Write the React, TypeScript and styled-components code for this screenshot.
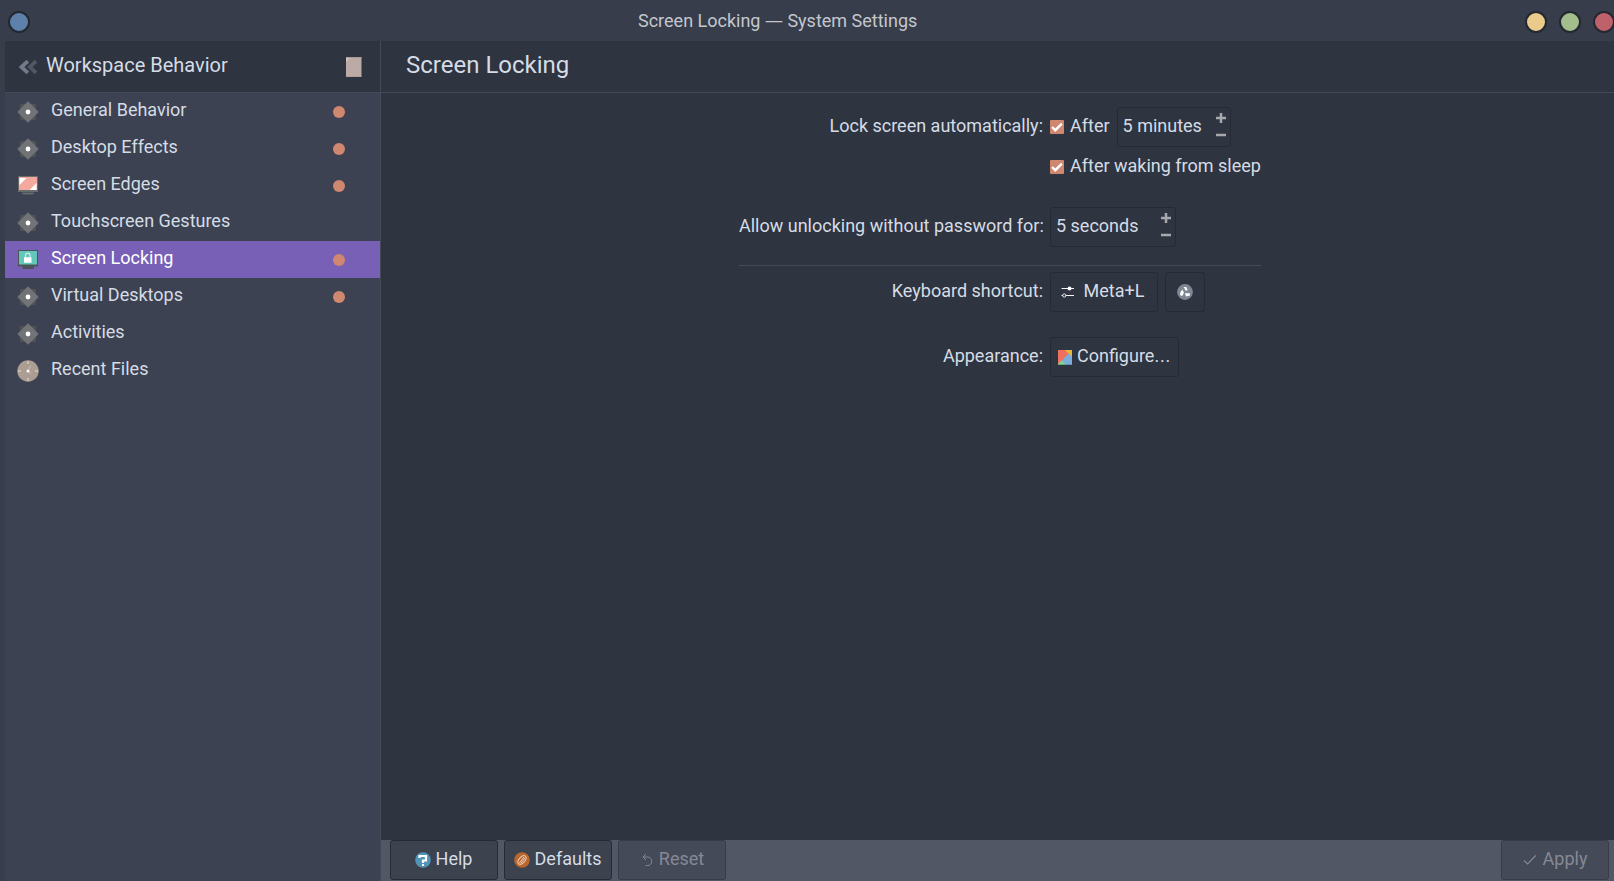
import React from "react";
import styled, { createGlobalStyle } from "styled-components";

const Global = createGlobalStyle`
  * { box-sizing: border-box; }
  html, body { margin: 0; padding: 0; background: #2e3440; overflow: hidden; }
  body { font-family: Roboto, "Noto Sans", sans-serif; font-size: 18px; color: #d5dce6; }
  svg { flex: none; }
`;

const Window = styled.div`
  width: 1614px;
  height: 881px;
  display: flex;
  flex-direction: column;
  overflow: hidden;
  background: #373e4b;
`;

const TitleBar = styled.header`
  height: 41px;
  flex: none;
  display: grid;
  grid-template-columns: 638px 1fr auto;
  align-items: center;
  padding: 3px 0 0 8px;
  margin-right: -1px;
  background: #373d4b;
`;

const WindowTitle = styled.span`
  color: #c3c7cd;
  margin-left: -8px;
  line-height: 34px;
  padding-bottom: 2px;
  white-space: nowrap;
`;

const Dash = styled.span`
  font-family: "Noto Sans", sans-serif;
  line-height: 1;
`;

const WindowButtons = styled.div`
  display: flex;
  gap: 12px;
`;

const RoundButton = styled.span<{ $color: string }>`
  width: 22px;
  height: 22px;
  border-radius: 50%;
  border: 2px solid #232831;
  background: ${(p) => p.$color};
`;

const Body = styled.div`
  flex: 1;
  min-height: 0;
  display: flex;
  padding-left: 5px;
`;

const Sidebar = styled.nav`
  width: 376px;
  flex: none;
  background: #3c4251;
  border-right: 1px solid #444956;
`;

const SideHeader = styled.div`
  height: 52px;
  display: flex;
  align-items: center;
  padding: 0 18px 0 13px;
  background: #2e3440;
  border-bottom: 1px solid #444956;
`;

const SideTitle = styled.span`
  flex: 1;
  margin-left: 8px;
  font-size: 20px;
  line-height: 44px;
  padding-bottom: 3px;
`;

const NavRow = styled.div<{ $active?: boolean }>`
  height: 37px;
  display: flex;
  align-items: center;
  padding: 0 35px 0 12px;
  background: ${(p) => (p.$active ? "#7860b7" : "transparent")};
  color: ${(p) => (p.$active ? "#ffffff" : "#d5dce6")};
`;

const NavLabel = styled.span`
  flex: 1;
  margin-left: 12px;
  line-height: 34px;
  padding-bottom: 3px;
`;

const Dot = styled.span`
  width: 12px;
  height: 12px;
  border-radius: 50%;
  background: #d08770;
  margin-top: 1px;
`;

const Main = styled.main`
  flex: 1;
  min-width: 0;
  display: flex;
  flex-direction: column;
  background: #2e3440;
`;

const MainHeader = styled.h1`
  margin: 0;
  height: 52px;
  flex: none;
  padding-left: 25px;
  font-size: 24px;
  font-weight: 400;
  line-height: 48px;
  border-bottom: 1px solid #444956;
`;

const Form = styled.div`
  flex: 1;
  padding: 14px 0 0 358px;
`;

const FormRow = styled.div<{ $gap?: number }>`
  height: 40px;
  margin-top: ${(p) => p.$gap ?? 0}px;
  display: grid;
  grid-template-columns: 304px auto;
  column-gap: 7px;
  align-items: center;
  justify-content: start;
`;

const Text = styled.span`
  line-height: 34px;
  padding-bottom: 3px;
  white-space: nowrap;
`;

const Dots = styled.span`
  letter-spacing: 0.8px;
`;

const Label = styled(Text)`
  text-align: right;
`;

const Controls = styled.div`
  display: flex;
  align-items: center;
`;

const CheckBox = styled.span`
  width: 14px;
  height: 14px;
  border-radius: 1px;
  background: #d08770;
  margin-right: 6px;
  display: flex;
`;

const Spin = styled.div<{ $width: number }>`
  width: ${(p) => p.$width}px;
  height: 40px;
  display: flex;
  align-items: center;
  justify-content: space-between;
  padding: 0 3px 0 5px;
  border: 1px solid #262a34;
  border-radius: 3px;
`;

const Divider = styled.hr`
  width: 522px;
  height: 1px;
  margin: 18px 0 6px;
  border: 0;
  background: #444956;
`;

const Button = styled.div<{ $width: number; $fill?: string; $off?: boolean }>`
  width: ${(p) => p.$width}px;
  height: 40px;
  display: flex;
  align-items: center;
  justify-content: center;
  border: 1px solid ${(p) => (p.$off ? "#383c49" : "#262a34")};
  border-radius: 3px;
  background: ${(p) => p.$fill ?? "transparent"};
  color: ${(p) => (p.$off ? "#858995" : "#d5dce6")};
`;

const Footer = styled.footer`
  height: 41px;
  flex: none;
  display: flex;
  gap: 6px;
  padding: 0 5px 0 9px;
  background: #525766;
`;

const Spacer = styled.span`
  flex: 1;
`;

const Gap = styled.span<{ $w: number }>`
  width: ${(p) => p.$w}px;
`;

const GearIcon = () => (
  <svg width="22" height="22" viewBox="0 0 22 22">
    <rect x="3" y="3" width="16" height="16" rx="1" fill="#505356" />
    <path d="M11 0.3 21.7 11 11 21.7 0.3 11Z" fill="#727376" />
    <circle cx="11" cy="11" r="2.4" fill="#fff" />
  </svg>
);

const EdgesIcon = () => (
  <svg width="22" height="22" viewBox="0 0 22 22">
    <path d="M1 1h20v16H1z M5.500 17.500h11v2h-11z" fill="#686d6c" />
    <path d="M2 2h18v13H2z" fill="#f5a89d" />
    <path d="M2.500 3h7l-7 7z M19.500 8v7h-7z" fill="#fff" />
  </svg>
);

const LockScreenIcon = () => (
  <svg width="22" height="22" viewBox="0 0 22 22">
    <path d="M1 1h20v16.500h-4V20H5.500v-2.500H1z" fill="#4d5457" />
    <path d="M2 2h18v13.500H2z" fill="#62c6b9" />
    <path d="M8.500 8.500V6.500a2.300 2.300 0 0 1 4.600 0v2" fill="none" stroke="#c9efe9" strokeWidth="1.200" />
    <rect x="7" y="8.200" width="7.500" height="5.500" rx="0.500" fill="#fff" />
  </svg>
);

const ClockIcon = () => (
  <svg width="22" height="22" viewBox="0 0 22 22">
    <circle cx="11" cy="11" r="10.700" fill="#ab9d91" />
    <path d="M11 1v3M11 18v3M1 11h3M18 11h3" stroke="#c8beb6" strokeWidth="2" />
    <path d="M11 11 13.800 5.500M11 11l3.500 3" stroke="#c8beb6" />
    <circle cx="11" cy="11" r="1.500" fill="#fff" />
  </svg>
);

const BackIcon = () => (
  <svg width="20" height="16" viewBox="0 0 20 16">
    <path d="M18 2.200 12 8l6 5.800" fill="none" stroke="#515764" strokeWidth="3.800" />
    <path d="M9.800 2.200 3.500 8l6.300 5.800" fill="none" stroke="#747b88" strokeWidth="3.800" />
  </svg>
);

const PageIcon = () => (
  <svg width="16" height="20" viewBox="0 0 16 20">
    <path d="M0 0h15.500v20H0z" fill="#bcaaa6" />
    <path d="M0 0h5L0 5z" fill="#cfc1be" />
    <path d="M0 0h15.500v.7H0zM0 19.500h15.500v.5H0z" fill="#a39490" />
  </svg>
);

const CheckIcon = () => (
  <svg width="14" height="14" viewBox="0 0 14 14">
    <path d="M2.100 7 5.300 10.200 11.900 3.700" fill="none" stroke="#fff" strokeWidth="2.400" />
  </svg>
);

const Steppers = () => (
  <svg width="12" height="38" viewBox="0 0 12 38">
    <path d="M1 10h10M6 5v10M1 27h10" stroke="#a6a8ab" strokeWidth="2.500" fill="none" />
  </svg>
);

const SlidersIcon = () => (
  <svg width="13" height="12" viewBox="0 0 13 12">
    <path d="M0.500 2.500h12.500M4.500 9.500H13" stroke="#f2f4f7" strokeWidth="1.100" />
    <path d="M0.500 9.500h1.500" stroke="#f2f4f7" />
    <circle cx="8.500" cy="2.500" r="2" fill="#fff" />
    <circle cx="3.300" cy="9.500" r="1.600" fill="none" stroke="#e9ecf0" />
  </svg>
);

const ClearIcon = () => (
  <svg width="16" height="16" viewBox="0 0 16 16">
    <circle cx="8" cy="8" r="7.900" fill="#7d8894" />
    <path d="M6.500 3h2.700l1.500 3-2 .7L7.500 4.500zM5.400 5.500l1.500 3.200L5.200 12 3 11l.5-3zM8 9.200h4.700l.3 2.300-4 .9z" fill="#fff" />
  </svg>
);

const ThemeIcon = () => (
  <svg width="14" height="15" viewBox="0 0 14 15">
    <path d="M0 0h14v15H0z" fill="#f0705f" />
    <path d="M7 0h7v7z" fill="#e6b835" />
    <path d="M10.500 3.500 14 7v8H0z" fill="#7aaedd" />
    <path d="M0 15v-1l3.500-3.500L8 15z" fill="#7fd68d" />
    <path d="M0 14.300h14v.7H0z" fill="#000" opacity=".25" />
  </svg>
);

const HelpIcon = () => (
  <svg width="16" height="16" viewBox="0 0 16 16">
    <circle cx="8" cy="8" r="7.800" fill="#5294b8" />
    <path d="M4.500 6V4H11v4.500H8V11" fill="none" stroke="#fff" strokeWidth="2.200" />
    <path d="M7 12h2v2H7z" fill="#fff" />
  </svg>
);

const DefaultsIcon = () => (
  <svg width="16" height="16" viewBox="0 0 16 16">
    <circle cx="8" cy="8" r="7.800" fill="#b9662f" />
    <g fill="none" stroke="#f0cdb4" strokeWidth="1">
      <ellipse cx="8" cy="8" rx="5.200" ry="2.900" transform="rotate(-50 8 8)" />
      <path d="M5.300 11.200 10 5M6.800 11.500 11 6" />
    </g>
  </svg>
);

const ResetIcon = () => (
  <svg width="12" height="14" viewBox="0 0 12 14">
    <path d="M5 1 2 4l3 3M2 4h4.500a4.300 4.300 0 0 1 0 8.600H4.500" fill="none" stroke="#858995" />
  </svg>
);

const ApplyIcon = () => (
  <svg width="14" height="12" viewBox="0 0 14 12">
    <path d="M1 6.500 4.500 10 12.800 1.500" fill="none" stroke="#858995" strokeWidth="1.100" />
  </svg>
);

const items: { label: string; icon: React.FC; dot?: boolean; active?: boolean }[] = [
  { label: "General Behavior", icon: GearIcon, dot: true },
  { label: "Desktop Effects", icon: GearIcon, dot: true },
  { label: "Screen Edges", icon: EdgesIcon, dot: true },
  { label: "Touchscreen Gestures", icon: GearIcon },
  { label: "Screen Locking", icon: LockScreenIcon, dot: true, active: true },
  { label: "Virtual Desktops", icon: GearIcon, dot: true },
  { label: "Activities", icon: GearIcon },
  { label: "Recent Files", icon: ClockIcon },
];

export default function App() {
  return (
    <Window>
      <Global />
      <TitleBar>
        <RoundButton $color="#5e81ac" />
        <WindowTitle>Screen Locking <Dash>—</Dash> System Settings</WindowTitle>
        <WindowButtons>
          <RoundButton $color="#ebcb8b" />
          <RoundButton $color="#a3be8c" />
          <RoundButton $color="#bf616a" />
        </WindowButtons>
      </TitleBar>
      <Body>
        <Sidebar>
          <SideHeader>
            <BackIcon />
            <SideTitle>Workspace Behavior</SideTitle>
            <PageIcon />
          </SideHeader>
          {items.map(({ label, icon: Icon, dot, active }) => (
            <NavRow key={label} $active={active}>
              <Icon />
              <NavLabel>{label}</NavLabel>
              {dot && <Dot />}
            </NavRow>
          ))}
        </Sidebar>
        <Main>
          <MainHeader>Screen Locking</MainHeader>
          <Form>
            <FormRow>
              <Label>Lock screen automatically:</Label>
              <Controls>
                <CheckBox><CheckIcon /></CheckBox>
                <Text>After</Text>
                <Gap $w={7} />
                <Spin $width={114}><Text>5 minutes</Text><Steppers /></Spin>
              </Controls>
            </FormRow>
            <FormRow>
              <Label />
              <Controls>
                <CheckBox><CheckIcon /></CheckBox>
                <Text>After waking from sleep</Text>
              </Controls>
            </FormRow>
            <FormRow $gap={20}>
              <Label>Allow unlocking without password for:</Label>
              <Spin $width={126}><Text>5 seconds</Text><Steppers /></Spin>
            </FormRow>
            <Divider />
            <FormRow>
              <Label>Keyboard shortcut:</Label>
              <Controls>
                <Button $width={108}><SlidersIcon /><Gap $w={10} /><Text>Meta+L</Text><Gap $w={3} /></Button>
                <Gap $w={7} />
                <Button $width={40}><ClearIcon /></Button>
              </Controls>
            </FormRow>
            <FormRow $gap={25}>
              <Label>Appearance:</Label>
              <Button $width={129}><ThemeIcon /><Gap $w={5} /><Text>Configure<Dots>...</Dots></Text></Button>
            </FormRow>
          </Form>
          <Footer>
            <Button $width={108} $fill="#3c424e"><HelpIcon /><Gap $w={5} /><Text>Help</Text><Gap $w={1} /></Button>
            <Button $width={108} $fill="#3c424e"><DefaultsIcon /><Gap $w={5} /><Text>Defaults</Text><Gap $w={1} /></Button>
            <Button $width={108} $fill="#454a58" $off><Gap $w={1} /><ResetIcon /><Gap $w={6} /><Text>Reset</Text></Button>
            <Spacer />
            <Button $width={108} $fill="#454a58" $off><ApplyIcon /><Gap $w={6} /><Text>Apply</Text></Button>
          </Footer>
        </Main>
      </Body>
    </Window>
  );
}
